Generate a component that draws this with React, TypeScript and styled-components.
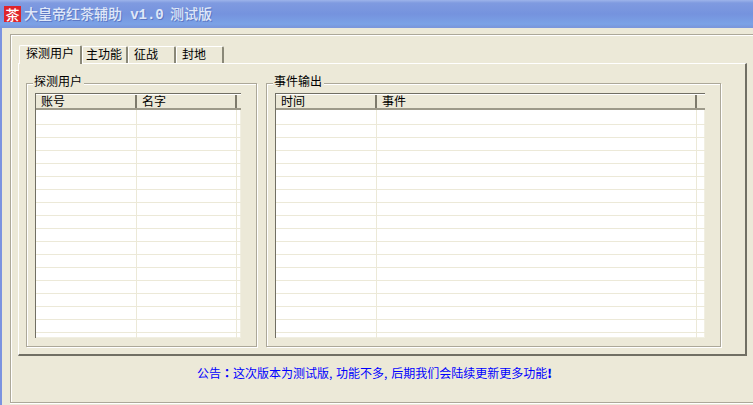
import React from 'react';
import styled, { createGlobalStyle } from 'styled-components';

const FONT = `"Noto Sans CJK SC", "Liberation Sans", sans-serif`;

const GlobalStyle = createGlobalStyle`
    html, body {
        margin: 0;
        padding: 0;
        height: 100%;
        background: #ece9d8;
    }
    #root {
        height: 100%;
    }
`;

const Window = styled.div`
    width: 753px;
    height: 405px;
    display: flex;
    flex-direction: column;
    overflow: hidden;
    background: #ece9d8;
    font-family: ${FONT};
    font-size: 12px;
    color: #000;
`;

const TitleBar = styled.div`
    height: 28px;
    flex: none;
    display: flex;
    align-items: center;
    gap: 3px;
    padding: 0 0 1px 4px;
    box-sizing: border-box;
    background: linear-gradient(
        to bottom,
        #9db4ea 0,
        #7f9ae0 3px,
        #7593de 14px,
        #7ba2e6 24px,
        #7a97dc 27px,
        #7a97dc 28px
    );
`;

const AppIcon = styled.span`
    width: 17px;
    height: 16px;
    display: flex;
    align-items: center;
    justify-content: center;
    background: #e0242a;
    color: #fff;
    font-size: 14px;
    font-weight: 500;
    line-height: 16px;
`;

const TitleText = styled.span`
    color: #dfe7f8;
    font-size: 14px;
    font-weight: 500;
    line-height: 16px;
    white-space: pre;
    text-shadow: 1px 1px 0 #5d78c4;
`;

const Version = styled.span`
    font-family: "Liberation Mono", monospace;
    font-weight: 700;
    font-size: 14px;
    margin: 0 3px 0 5px;
`;

const Frame = styled.div`
    flex: 1;
    min-height: 0;
    display: flex;
    border-left: 2px solid #7b93e0;
    padding: 6px 0 2px 8px;
`;

const OuterPanel = styled.div`
    flex: 1;
    box-sizing: border-box;
    display: flex;
    flex-direction: column;
    border: 1px solid #aca899;
    box-shadow: inset 1px 1px 0 #fff, 0 1px 0 #fff;
    padding: 9px 6px 0 7px;
`;

const TabStrip = styled.div`
    height: 19px;
    display: flex;
    align-items: flex-end;
    padding-left: 1px;
    position: relative;
    z-index: 1;
`;

const Tab = styled.div<{ $active?: boolean; $width: number; $inset: number }>`
    width: ${props => props.$width}px;
    height: ${props => (props.$active ? 19 : 17)}px;
    margin-bottom: ${props => (props.$active ? -1 : 0)}px;
    box-sizing: border-box;
    border-top: 1px solid #fff;
    border-left: 1px solid #fff;
    border-right: 2px solid #8a8878;
    border-radius: 2px 2px 0 0;
    background: #ece9d8;
    padding-left: ${props => props.$inset}px;
    line-height: 13px;
    white-space: nowrap;
`;

const TabPage = styled.div`
    height: 293px;
    box-sizing: border-box;
    display: flex;
    gap: 9px;
    border-top: 1px solid #fff;
    border-left: 1px solid #fff;
    border-right: 2px solid #716f64;
    border-bottom: 2px solid #716f64;
    padding: 19px 24px 7px 7px;
`;

const GroupBox = styled.div<{ $width: number }>`
    width: ${props => props.$width}px;
    flex: none;
    box-sizing: border-box;
    position: relative;
    border: 1px solid #aca899;
    box-shadow: inset 1px 1px 0 #fff, 1px 1px 0 #fff;
    padding: 9px 15px 8px 8px;
    display: flex;
`;

const Legend = styled.span`
    position: absolute;
    left: 6px;
    top: -10px;
    padding: 0 2px 0 1px;
    background: #ece9d8;
    line-height: 14px;
`;

const ListView = styled.div`
    flex: 1;
    display: flex;
    flex-direction: column;
    overflow: hidden;
    background: #fff;
    border-top: 1px solid #716f64;
    border-left: 1px solid #716f64;
    box-shadow: inset -1px -1px 0 #f1efe2;
`;

const HeaderRow = styled.div`
    height: 16px;
    flex: none;
    display: flex;
    background: #ece9d8;
    border-top: 1px solid #fff;
    border-bottom: 2px solid #9d9a8a;
    box-sizing: border-box;
`;

const HeaderCell = styled.div<{ $width: number }>`
    width: ${props => props.$width}px;
    flex: none;
    box-sizing: border-box;
    border-right: 2px solid #7d7a6c;
    padding-left: 5px;
    line-height: 12px;
    white-space: nowrap;
`;

const HeaderFiller = styled.div`
    flex: 1;
`;

const Row = styled.div`
    height: 13px;
    flex: none;
    display: flex;
    box-sizing: border-box;
    border-bottom: 1px solid #ece9d8;

    &:nth-child(2) {
        height: 15px;
    }
`;

const Cell = styled.div<{ $width: number }>`
    width: ${props => props.$width}px;
    flex: none;
    box-sizing: border-box;
    border-right: 1px solid #ece9d8;
`;

const Notice = styled.div`
    flex: 1;
    padding: 8px 0 0 179px;
    color: #0000ff;
    line-height: 18px;
    white-space: nowrap;
`;

const Colon = styled.span`
    font-family: "Noto Sans CJK TC", sans-serif;
    font-weight: 700;
`;

const Comma = styled.span`
    margin-right: 1px;
`;

const Bang = styled.span`
    font-weight: 900;
`;

interface Column {
    title: string;
    width: number;
}

const TABS = [
    { label: '探测用户', width: 63, inset: 6, active: true },
    { label: '主功能', width: 46, inset: 3 },
    { label: '征战', width: 48, inset: 5 },
    { label: '封地', width: 48, inset: 5 },
];

const USER_COLUMNS: Column[] = [
    { title: '账号', width: 101 },
    { title: '名字', width: 100 },
];

const EVENT_COLUMNS: Column[] = [
    { title: '时间', width: 101 },
    { title: '事件', width: 320 },
];

const ROW_COUNT = 18;

const EventList = ({ columns }: { columns: Column[] }) => (
    <ListView>
        <HeaderRow>
            {columns.map(c => (
                <HeaderCell key={c.title} $width={c.width}>
                    {c.title}
                </HeaderCell>
            ))}
            <HeaderFiller />
        </HeaderRow>
        {Array.from({ length: ROW_COUNT }, (_, i) => (
            <Row key={i}>
                {columns.map(c => (
                    <Cell key={c.title} $width={c.width} />
                ))}
            </Row>
        ))}
    </ListView>
);

const App = () => (
    <Window>
        <GlobalStyle />
        <TitleBar>
            <AppIcon>茶</AppIcon>
            <TitleText>
                大皇帝红茶辅助 <Version>v1.0</Version> 测试版
            </TitleText>
        </TitleBar>
        <Frame>
            <OuterPanel>
                <TabStrip>
                    {TABS.map(t => (
                        <Tab key={t.label} $active={t.active} $width={t.width} $inset={t.inset}>
                            {t.label}
                        </Tab>
                    ))}
                </TabStrip>
                <TabPage>
                    <GroupBox $width={231}>
                        <Legend>探测用户</Legend>
                        <EventList columns={USER_COLUMNS} />
                    </GroupBox>
                    <GroupBox $width={455}>
                        <Legend>事件输出</Legend>
                        <EventList columns={EVENT_COLUMNS} />
                    </GroupBox>
                </TabPage>
                <Notice>
                    公告<Colon>：</Colon>这次版本为测试版<Comma>,</Comma> 功能不多<Comma>,</Comma> 后期我们会陆续更新更多功能<Bang>!</Bang>
                </Notice>
            </OuterPanel>
        </Frame>
    </Window>
);

export default App;
